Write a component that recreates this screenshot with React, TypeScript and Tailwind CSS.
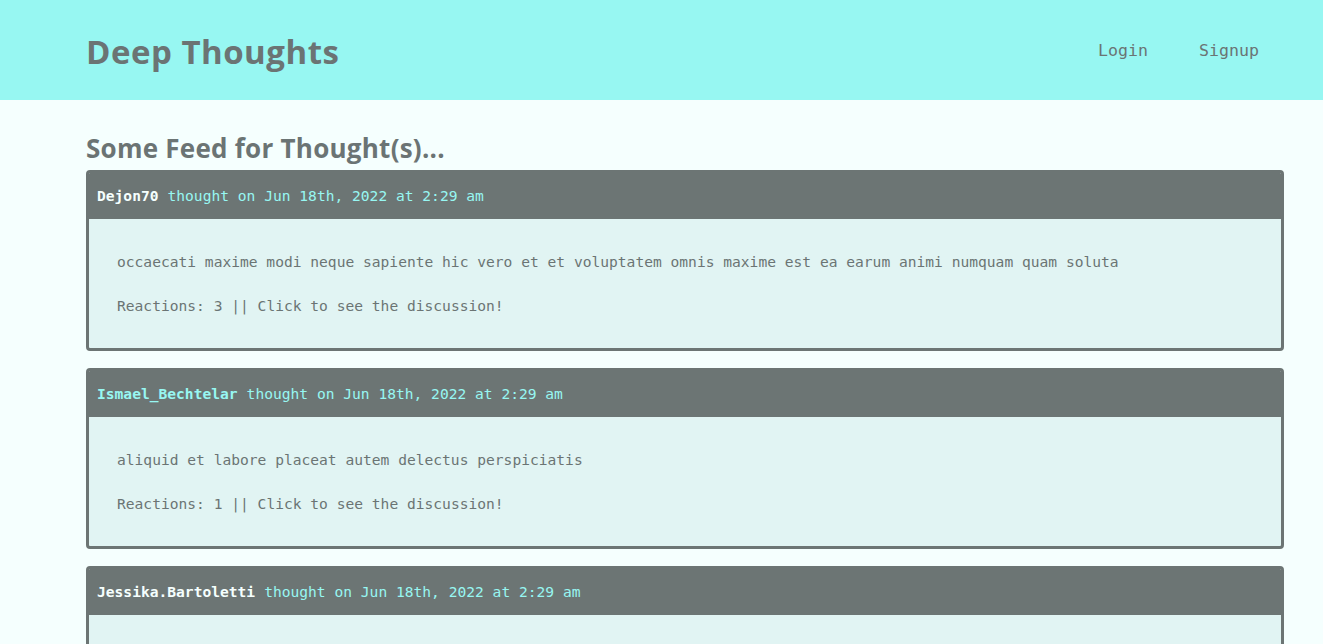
const thoughts = [
  {
    user: "Dejon70",
    highlight: false,
    text: "occaecati maxime modi neque sapiente hic vero et et voluptatem omnis maxime est ea earum animi numquam quam soluta",
    reactions: 3,
  },
  {
    user: "Ismael_Bechtelar",
    highlight: true,
    text: "aliquid et labore placeat autem delectus perspiciatis",
    reactions: 1,
  },
  {
    user: "Jessika.Bartoletti",
    highlight: false,
    text: "voluptas sint ut quia et repellendus dolores",
    reactions: 2,
  },
]

const mono = "font-['DejaVu_Sans_Mono','Liberation_Mono',monospace]"

export default function App() {
  return (
    <div className="min-h-screen bg-[#f5fffe] text-[#6b7474]">
      <header className="bg-[#97f7f2] h-[100px] flex items-center justify-between pl-[86px] pr-[64px]">
        <h1 className="font-['Open_Sans','Noto_Sans',sans-serif] font-bold text-[33px] leading-none tracking-[0.5px] pt-[2px]">
          Deep Thoughts
        </h1>
        <nav className={`${mono} text-[16.6px] flex gap-[51px] pt-[3px]`}>
          <a href="#">Login</a>
          <a href="#">Signup</a>
        </nav>
      </header>

      <main className="pl-[86px] pr-[39px] pt-[32px]">
        <h2 className="font-['Open_Sans','Noto_Sans',sans-serif] font-bold text-[26px] leading-[32px] tracking-[0.25px] mb-[6px]">
          Some Feed for Thought(s)...
        </h2>
        <div className="flex flex-col gap-[17px]">
          {thoughts.map((t) => (
            <div
              key={t.user}
              className={`${mono} text-[14.6px] border-[3px] border-[#6c7574] rounded-[4px] bg-[#e1f4f3] overflow-hidden`}
            >
              <div className="bg-[#6c7574] h-[46px] flex items-center px-[8px]">
                <span className={`font-bold ${t.highlight ? "text-[#97f7f2]" : "text-[#f5fffe]"}`}>
                  {t.user}
                </span>
                <span className="text-[#97f7f2] ml-[9px]">thought on Jun 18th, 2022 at 2:29 am</span>
              </div>
              <div className="px-[28px] pt-[31px] pb-[30px] flex flex-col gap-[20px] leading-[24px]">
                <p>{t.text}</p>
                <p>Reactions: {t.reactions} || Click to see the discussion!</p>
              </div>
            </div>
          ))}
        </div>
      </main>
    </div>
  )
}
